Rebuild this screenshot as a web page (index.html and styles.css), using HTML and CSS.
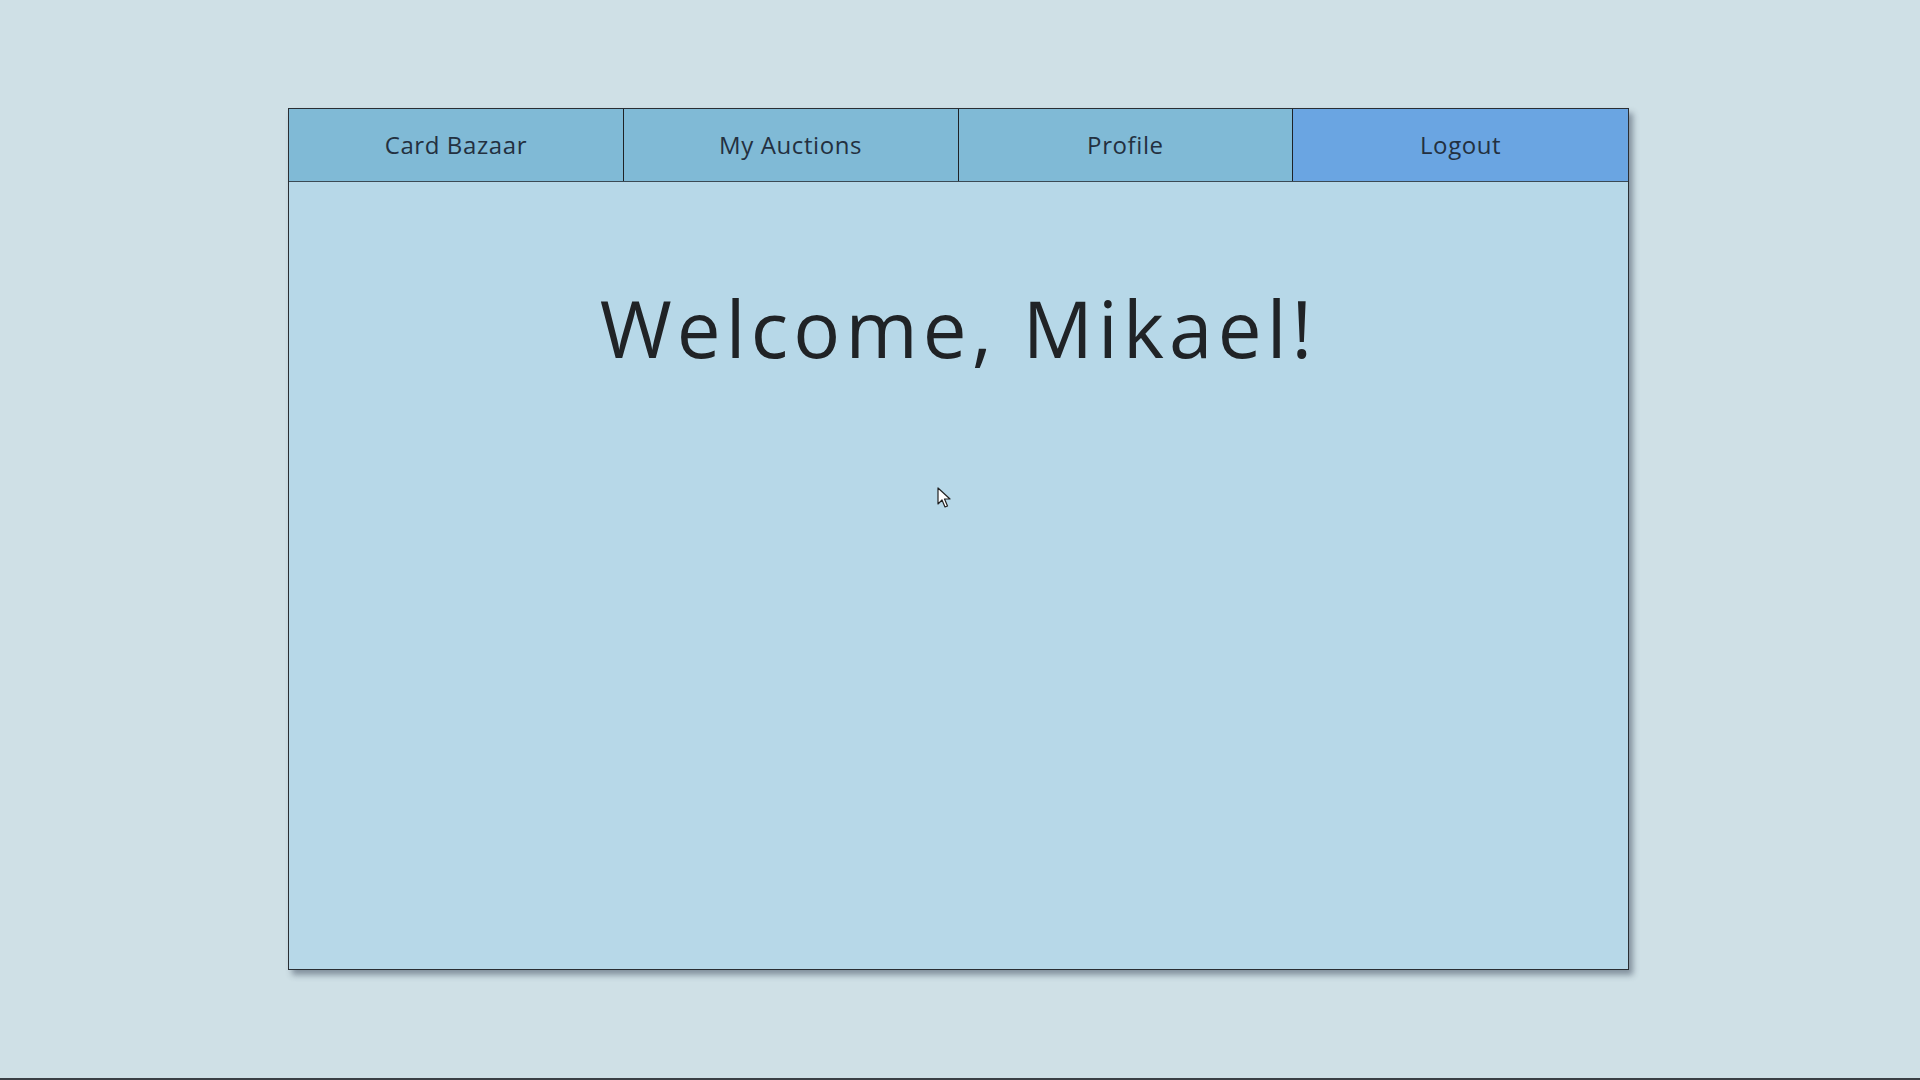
FILE: index.html
```html
<!DOCTYPE html>
<html>
<head>
<meta charset="utf-8">
<link rel="stylesheet" href="styles.css">
</head>
<body>
<div class="page">
  <div class="card">
    <nav class="nav">
      <div class="nav-item">Card Bazaar</div>
      <div class="nav-item">My Auctions</div>
      <div class="nav-item">Profile</div>
      <div class="nav-item nav-item--active">Logout</div>
    </nav>
    <main class="content">
      <h1 class="welcome">Welcome, Mikael!</h1>
    </main>
    <svg class="cursor" width="14" height="22" viewBox="0 0 14 22"><path d="M1 1 L1 17 L5 13 L8 20 L10.5 19 L7.5 12 L13 12 Z" fill="#fff" stroke="#222" stroke-width="1.2" stroke-linejoin="round"/></svg>
  </div>
</div>
</body>
</html>
```
FILE: styles.css
```css
html, body {
  margin: 0;
  padding: 0;
}
body {
  width: 1920px;
  height: 1080px;
  background: #cfe0e6;
  font-family: "Open Sans", "Liberation Sans", sans-serif;
  color: #222629;
  overflow: hidden;
  box-sizing: border-box;
  border-bottom: 2px solid #3a3f44;
}
.page {
  padding-top: 108px;
  padding-left: 288px;
}
.card {
  position: relative;
  width: 1339px;
  height: 860px;
  border: 1px solid #2a2e33;
  background: #b7d8e8;
  box-shadow: 4px 5px 6px rgba(40, 50, 70, 0.45);
  display: flex;
  flex-direction: column;
}
.nav {
  display: grid;
  grid-template-columns: repeat(4, 1fr);
  height: 72px;
  border-bottom: 1px solid #3a4a55;
}
.nav-item {
  display: flex;
  align-items: center;
  justify-content: center;
  background: #80bad6;
  border-right: 1px solid #1e2226;
  font-size: 24px;
  letter-spacing: 0.6px;
  color: #233040;
  padding-bottom: 1px;
}
.nav-item:last-child {
  border-right: none;
}
.nav-item--active {
  background: #6aa5e2;
}
.content {
  flex: 1;
  display: flex;
  flex-direction: column;
  align-items: center;
}
.welcome {
  margin: 96px 0 0 0;
  font-size: 78px;
  font-weight: 500;
  letter-spacing: 5.2px;
  line-height: 1.3;
  color: #202326;
}
.cursor {
  position: absolute;
  left: 648px;
  top: 378px;
}
```
